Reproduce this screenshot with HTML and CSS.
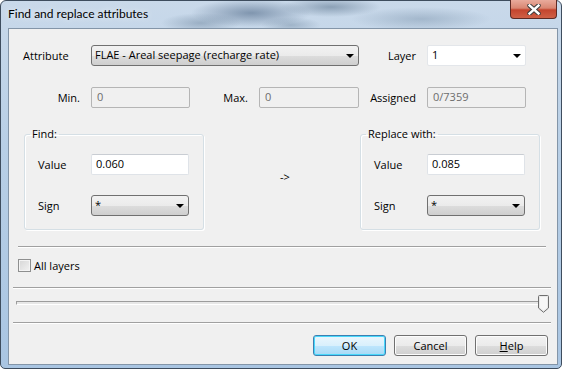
FILE: index.html
```html
<!DOCTYPE html>
<html lang="en">
<head>
  <meta charset="UTF-8" />
  <title>Find and replace attributes</title>
  <link rel="stylesheet" href="styles.css">
</head>
<body>
  <div class="window">
    <div class="titlebar">
      <span class="title">Find and replace attributes</span>
      <div class="close">
        <svg width="14" height="11" viewBox="0 0 14 11">
          <path d="M2.5 1.5 L11.5 9.5 M11.5 1.5 L2.5 9.5" stroke="#3b3b3b" stroke-width="4.4" stroke-linecap="round" />
          <path d="M2.5 1.5 L11.5 9.5 M11.5 1.5 L2.5 9.5" stroke="#fff" stroke-width="2.4" stroke-linecap="square" />
        </svg>
      </div>
    </div>

    <div class="client">
      <div class="top-grid">
        <label class="lbl lbl-left">Attribute</label>
        <div class="combo combo-list span-3">FLAE - Areal seepage (recharge rate)<span class="arrow"></span></div>
        <label class="lbl">Layer</label>
        <div class="combo combo-edit">1<span class="arrow"></span></div>

        <label class="lbl">Min.</label>
        <div class="field disabled">0</div>
        <label class="lbl">Max.</label>
        <div class="field disabled">0</div>
        <label class="lbl">Assigned</label>
        <div class="field disabled">0/7359</div>
      </div>

      <div class="groups">
        <fieldset class="group">
          <legend>Find:</legend>
          <div class="group-grid">
            <label class="lbl-left">Value</label>
            <div class="field">0.060</div>
            <label class="lbl-left">Sign</label>
            <div class="combo combo-list">*<span class="arrow"></span></div>
          </div>
        </fieldset>

        <div class="to-arrow">-&gt;</div>

        <fieldset class="group">
          <legend>Replace with:</legend>
          <div class="group-grid">
            <label class="lbl-left">Value</label>
            <div class="field">0.085</div>
            <label class="lbl-left">Sign</label>
            <div class="combo combo-list">*<span class="arrow"></span></div>
          </div>
        </fieldset>
      </div>

      <div class="sep sep-1"></div>

      <label class="check-row">
        <span class="checkbox"></span>
        <span>All layers</span>
      </label>

      <div class="sep sep-wide sep-2"></div>

      <div class="slider">
        <div class="track"></div>
        <svg class="thumb" width="11" height="18" viewBox="0 0 11 18">
          <path d="M1.5 0.5 H9.5 Q10.5 0.5 10.5 1.5 V13 L5.5 17.3 L0.5 13 V1.5 Q0.5 0.5 1.5 0.5 Z" fill="#e9e9e9" stroke="#6f6f6f" />
          <path d="M2 2 H9 V12.5 L5.5 15.5 L2 12.5 Z" fill="#f7f7f7" />
        </svg>
      </div>

      <div class="sep sep-wide sep-3"></div>

      <div class="buttons">
        <button class="btn btn-default">OK</button>
        <button class="btn">Cancel</button>
        <button class="btn"><u>H</u>elp</button>
      </div>
    </div>
  </div>
</body>
</html>
```

FILE: styles.css
```css
html, body {
  margin: 0;
  background: #fff;
  font-family: "Open Sans", Lato, sans-serif;
  font-size: 11px;
  color: #000;
}

/* aero frame */
.window {
  position: relative;
  width: 562px;
  height: 369px;
  box-sizing: border-box;
  padding: 0 3px 0 7px;
  border: 1px solid #3e4d5e;
  border-radius: 6px 6px 5px 5px;
  background:
    radial-gradient(ellipse 60px 14px at 250px 12px, rgba(80, 105, 135, 0.6), transparent),
    radial-gradient(ellipse 50px 10px at 330px 6px, rgba(90, 115, 140, 0.55), transparent),
    radial-gradient(ellipse 70px 12px at 420px 18px, rgba(110, 135, 160, 0.4), transparent),
    radial-gradient(ellipse 40px 10px at 200px 22px, rgba(100, 125, 150, 0.45), transparent),
    radial-gradient(ellipse 30px 8px at 290px 24px, rgba(100, 125, 150, 0.4), transparent),
    linear-gradient(180deg, #c9d9ea 0%, #b8cfe6 40%, #a9c5e2 100%);
}

.titlebar {
  height: 27px;
  display: flex;
  align-items: center;
}

.title {
  padding-bottom: 2px;
  font-family: Lato, "Open Sans", sans-serif;
  font-size: 12px;
  text-shadow: 0 0 6px rgba(255, 255, 255, 0.9);
}

.close {
  position: absolute;
  top: -1px;
  right: 4px;
  width: 45px;
  height: 18px;
  border: 1px solid #5d2a24;
  border-top: none;
  border-radius: 0 0 4px 4px;
  background: linear-gradient(180deg, #e9ab9c 0%, #d98672 45%, #c4452e 55%, #cf6046 100%);
  display: flex;
  align-items: center;
  justify-content: center;
}

.client {
  width: 550px;
  height: 337px;
  box-sizing: border-box;
  border: 1px solid #8395a8;
  background: #f0f0f0;
}

/* labels and fields */
.top-grid {
  display: grid;
  grid-template-columns: 68px 99px 69px 100px 68px 99px;
  grid-auto-rows: 21px;
  row-gap: 21px;
  margin: 16px 0 0 14px;
}

.lbl {
  display: flex;
  align-items: center;
  justify-content: flex-end;
  padding-right: 11px;
}

.lbl-left {
  display: flex;
  align-items: center;
  justify-content: flex-start;
}

.span-3 {
  grid-column: span 3;
}

.combo {
  display: flex;
  align-items: center;
  justify-content: space-between;
  box-sizing: border-box;
  padding: 0 4px 2px 3px;
  border-radius: 3px;
}

.combo-list {
  border: 1px solid #707070;
  background: linear-gradient(180deg, #f2f2f2 0%, #ebebeb 50%, #dddddd 51%, #cfcfcf 100%);
}

.combo-edit {
  padding-left: 4px;
  border: 1px solid #e3e6ea;
  border-radius: 2px;
  background: #fff;
}

.arrow {
  width: 0;
  height: 0;
  margin-top: 2px;
  border-left: 4px solid transparent;
  border-right: 4px solid transparent;
  border-top: 4px solid #000;
}

.field {
  display: flex;
  align-items: center;
  box-sizing: border-box;
  padding: 0 4px 2px 4px;
  border: 1px solid #dfe3e8;
  border-top-color: #c9cdd3;
  border-radius: 2px;
  background: #fff;
}

.field.disabled {
  padding-left: 5px;
  border: 1px solid #b5b5b5;
  background: #f0f0f0;
  color: #6d6d6d;
}

/* group boxes */
.groups {
  display: flex;
  align-items: center;
  justify-content: space-between;
  width: 516px;
  margin: 18px 0 0 15px;
}

.group {
  width: 180px;
  box-sizing: border-box;
  margin: 0;
  padding: 12px 14px 13px 13px;
  border: 1px solid #d5dfe5;
  border-radius: 3px;
  box-shadow: inset 1px 1px 0 #fff, 1px 1px 0 #fff;
}

.group legend {
  margin-left: -8px;
  padding: 0 2px;
  line-height: 16px;
}

.group-grid {
  display: grid;
  grid-template-columns: 53px 98px;
  grid-auto-rows: 21px;
  row-gap: 20px;
}

.to-arrow {
  padding: 0 0 4px 6px;
}

/* separators */
.sep {
  height: 1px;
  border-top: 1px solid #a0a0a0;
  background: #fff;
}

.sep-1 {
  margin: 16px 11px 0 9px;
}

.sep-wide {
  margin-left: 4px;
  margin-right: 6px;
}

.sep-2 {
  margin-top: 15px;
}

.sep-3 {
  margin-top: 9px;
}

/* checkbox */
.check-row {
  display: flex;
  align-items: center;
  gap: 3px;
  height: 13px;
  margin: 11px 0 0 9px;
}

.checkbox {
  width: 13px;
  height: 13px;
  box-sizing: border-box;
  border: 1px solid #8e8f8f;
  background: linear-gradient(135deg, #d6d6d6 0%, #f2f2f2 100%);
  box-shadow: inset 0 0 0 1px #f4f4f4;
}

/* slider */
.slider {
  position: relative;
  height: 12px;
  padding-top: 6px;
  margin: 6px 8px 0 7px;
}

.track {
  height: 2px;
  border-top: 1px solid #9c9c9c;
  border-left: 1px solid #9c9c9c;
  border-bottom: 1px solid #fff;
  border-right: 1px solid #fff;
  background: #e7e7e7;
}

.thumb {
  position: absolute;
  top: 0;
  right: 0;
}

/* buttons */
.buttons {
  display: flex;
  justify-content: flex-end;
  gap: 8px;
  margin: 11px 9px 0 0;
}

.btn {
  width: 73px;
  height: 21px;
  padding: 0 0 1px;
  font-family: inherit;
  font-size: 11px;
  color: #000;
  border: 1px solid #707070;
  border-radius: 3px;
  background: linear-gradient(180deg, #f2f2f2 0%, #ebebeb 50%, #dddddd 51%, #cfcfcf 100%);
  box-shadow: inset 0 0 0 1px #fcfcfc;
}

.btn-default {
  border-color: #3c7fb1;
  background: linear-gradient(180deg, #eaf6fd 0%, #d9f0fc 50%, #bee6fd 51%, #a7d9f5 100%);
  box-shadow: inset 0 0 0 1px #48d8fb;
}
```
